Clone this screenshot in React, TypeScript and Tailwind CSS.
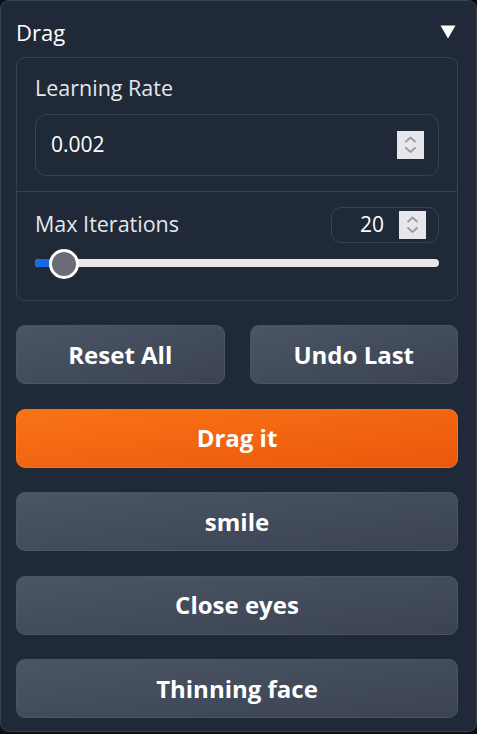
import React from 'react';

const font = { fontFamily: '"Open Sans", "Noto Sans", sans-serif' };

// native number spinner, drawn by hand
function Spinner() {
  return (
    <div className="h-[28px] w-[27px] shrink-0 bg-[#e6e6eb]">
      <svg width="27" height="28" viewBox="0 0 27 28" fill="none" stroke="#9a9aa6" strokeWidth="1.8">
        <path d="M8.5 11 L13.5 6.5 L18.5 11" />
        <path d="M8.5 16.5 L13.5 21 L18.5 16.5" />
      </svg>
    </div>
  );
}

function ActionButton({ label, primary = false }: { label: string; primary?: boolean }) {
  return (
    <button
      className={
        primary
          ? 'h-[59px] w-full rounded-[9px] border border-[#f97316] bg-gradient-to-br from-[#f97316] to-[#ea580c] text-[24px] font-bold text-white'
          : 'h-[59px] w-full rounded-[9px] border border-[#4b5563] bg-gradient-to-br from-[#4b5563] to-[#3b4353] text-[24px] font-bold text-white'
      }
    >
      {label}
    </button>
  );
}

export default function App() {
  return (
    <div className="min-h-screen bg-[#0b0f19]" style={font}>
      <div className="flex h-[732px] w-full flex-col rounded-[9px] border border-[#374151] bg-[#1f2937] pl-[15px] pr-[18px]">
        {/* Header */}
        <div className="flex h-[56px] items-center justify-between pt-[6px]">
          <span className="text-[22px] leading-none text-white">Drag</span>
          <svg width="16" height="14" viewBox="0 0 16 14" className="mr-[2px]">
            <path d="M0.5 0.5 H15.5 L8 13.5 Z" fill="white" />
          </svg>
        </div>

        {/* Settings card */}
        <div className="rounded-[9px] border border-[#374151]">
          <div className="px-[18px] pb-[15px] pt-[17px]">
            <div className="mb-[13px] text-[21.5px] leading-[26px] text-[#e5e7eb]">Learning Rate</div>
            <div className="flex h-[62px] items-center justify-between rounded-[11px] border border-[#374151] pl-[15px] pr-[14px]">
              <span className="text-[21px] text-white">0.002</span>
              <Spinner />
            </div>
          </div>
          <div className="border-t border-[#374151] px-[18px] pb-[21px] pt-[15px]">
            <div className="flex items-center justify-between">
              <span className="-mt-[3px] text-[21.5px] leading-[26px] text-[#e5e7eb]">Max Iterations</span>
              <div className="flex h-[36px] w-[108px] items-center justify-end gap-[15px] rounded-[10px] border border-[#374151] pr-[12px]">
                <span className="text-[21px] text-white">20</span>
                <Spinner />
              </div>
            </div>
            <div className="relative mt-[6px] h-[30px]">
              <div className="absolute left-0 right-0 top-[10px] h-[8px] rounded-full bg-[#e6e6eb]" />
              <div className="absolute left-0 top-[10px] h-[8px] w-[28px] rounded-full bg-[#1668e3]" />
              <div className="absolute left-[14px] top-0 h-[30px] w-[30px] rounded-full border-[3px] border-white bg-[#6c6c78]" />
            </div>
          </div>
        </div>

        {/* Buttons */}
        <div className="mt-[24px] flex flex-col gap-[24.5px]">
          <div className="flex gap-[25px]">
            <ActionButton label="Reset All" />
            <ActionButton label="Undo Last" />
          </div>
          <ActionButton label="Drag it" primary />
          <ActionButton label="smile" />
          <ActionButton label="Close eyes" />
          <ActionButton label="Thinning face" />
        </div>
      </div>
    </div>
  );
}
